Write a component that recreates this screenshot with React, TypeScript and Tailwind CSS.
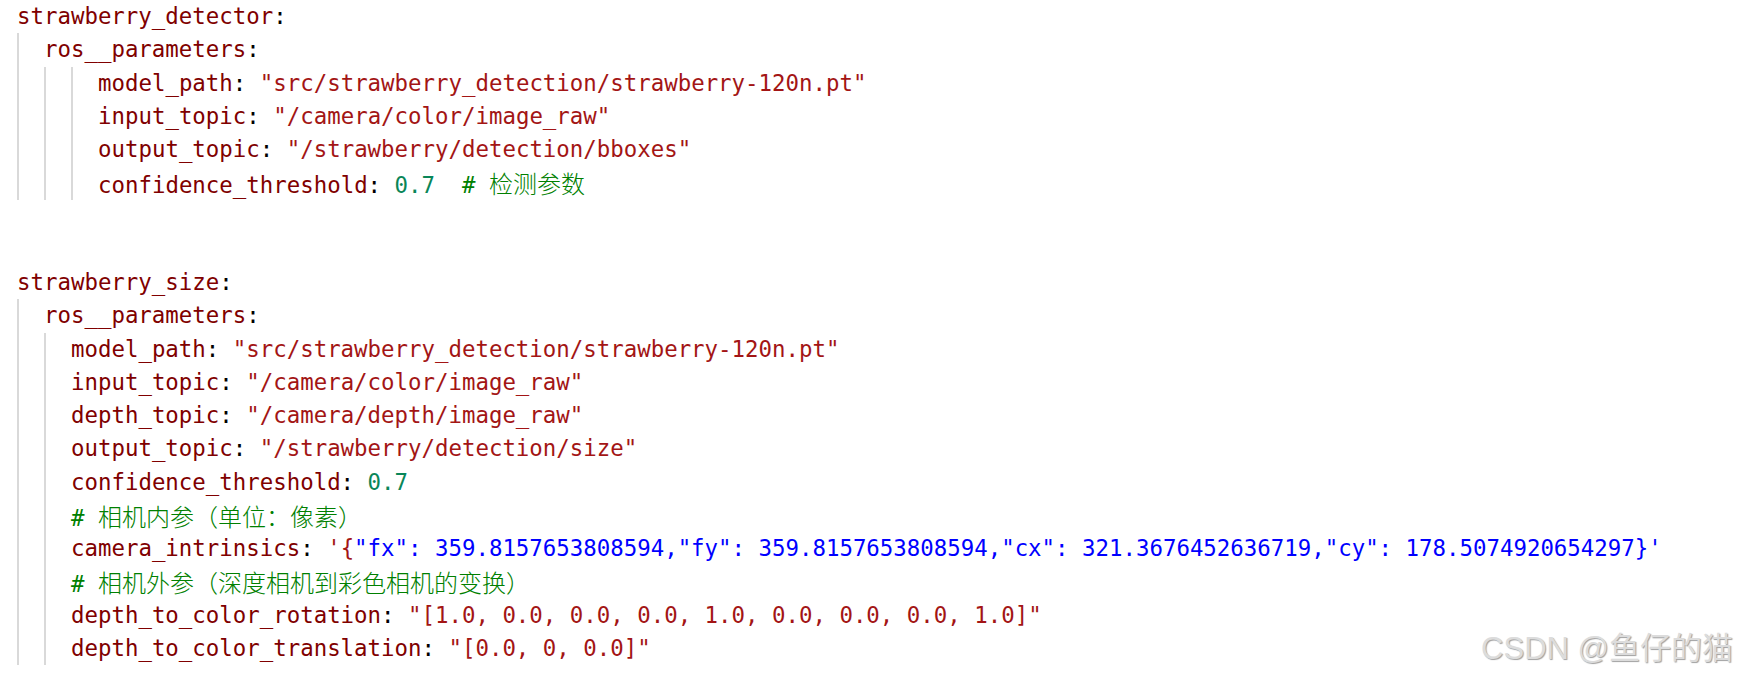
import React from 'react'

// token colours, VS Code light theme for yaml
const Key = ({ children }: { children: React.ReactNode }) => <span className="text-[#800000]">{children}</span>
const Str = ({ children }: { children: React.ReactNode }) => <span className="text-[#a31515]">{children}</span>
const Num = ({ children }: { children: React.ReactNode }) => <span className="text-[#098658]">{children}</span>
const Blue = ({ children }: { children: React.ReactNode }) => <span className="text-[#0000ff]">{children}</span>
const Comment = ({ children }: { children: React.ReactNode }) => <span className="text-[#008000]">{children}</span>
const Cjk = ({ children }: { children: React.ReactNode }) => (
  <span className="font-['Noto_Sans_CJK_SC',sans-serif] text-[24px] font-light">{children}</span>
)

const Line = ({ children }: { children?: React.ReactNode }) => (
  <div className="h-[33.25px] whitespace-pre">{children}</div>
)

// indent guide: 2px line, content shifted by two columns
const Guide = ({ children }: { children: React.ReactNode }) => (
  <div className="border-l-2 border-[#d9d9d9] pl-[25px]">{children}</div>
)

const Pair = ({ k, children }: { k: string; children: React.ReactNode }) => (
  <Line>
    <Key>{k}</Key>
    <span className="text-black">: </span>
    {children}
  </Line>
)

const App = () => {
  return (
    <div className="relative h-[676px] w-[1738px] overflow-hidden bg-white font-['DejaVu_Sans_Mono','Noto_Sans_CJK_SC',monospace] text-[22.4px] leading-[33.25px]">
      <div className="pl-[17px]">
        <Line>
          <Key>strawberry_detector</Key>
          <span className="text-black">:</span>
        </Line>
        <Guide>
          <Line>
            <Key>ros__parameters</Key>
            <span className="text-black">:</span>
          </Line>
          <Guide>
            <Guide>
              <Pair k="model_path">
                <Str>"src/strawberry_detection/strawberry-120n.pt"</Str>
              </Pair>
              <Pair k="input_topic">
                <Str>"/camera/color/image_raw"</Str>
              </Pair>
              <Pair k="output_topic">
                <Str>"/strawberry/detection/bboxes"</Str>
              </Pair>
              <Pair k="confidence_threshold">
                <Num>0.7</Num>
                {'  '}
                <Comment>
                  # <Cjk>检测参数</Cjk>
                </Comment>
              </Pair>
            </Guide>
          </Guide>
        </Guide>

        <Line />
        <Line />

        <Line>
          <Key>strawberry_size</Key>
          <span className="text-black">:</span>
        </Line>
        <Guide>
          <Line>
            <Key>ros__parameters</Key>
            <span className="text-black">:</span>
          </Line>
          <Guide>
            <Pair k="model_path">
              <Str>"src/strawberry_detection/strawberry-120n.pt"</Str>
            </Pair>
            <Pair k="input_topic">
              <Str>"/camera/color/image_raw"</Str>
            </Pair>
            <Pair k="depth_topic">
              <Str>"/camera/depth/image_raw"</Str>
            </Pair>
            <Pair k="output_topic">
              <Str>"/strawberry/detection/size"</Str>
            </Pair>
            <Pair k="confidence_threshold">
              <Num>0.7</Num>
            </Pair>
            <Line>
              <Comment>
                # <Cjk>相机内参（单位：像素）</Cjk>
              </Comment>
            </Line>
            <Pair k="camera_intrinsics">
              <Str>'{'{'}</Str>
              <Blue>
                "fx": 359.8157653808594,"fy": 359.8157653808594,"cx": 321.3676452636719,"cy": 178.5074920654297{'}'}'
              </Blue>
            </Pair>
            <Line>
              <Comment>
                # <Cjk>相机外参（深度相机到彩色相机的变换）</Cjk>
              </Comment>
            </Line>
            <Pair k="depth_to_color_rotation">
              <Str>"[1.0, 0.0, 0.0, 0.0, 1.0, 0.0, 0.0, 0.0, 1.0]"</Str>
            </Pair>
            <Pair k="depth_to_color_translation">
              <Str>"[0.0, 0, 0.0]"</Str>
            </Pair>
          </Guide>
        </Guide>
      </div>

      {/* watermark */}
      <div className="absolute bottom-[12px] right-[5px] font-['Liberation_Sans','Noto_Sans_CJK_SC',sans-serif] text-[31px] leading-none text-[#dcdcdc] [text-shadow:1px_1px_1px_#a0a0a0]">
        CSDN @鱼仔的猫
      </div>
    </div>
  )
}

export default App
